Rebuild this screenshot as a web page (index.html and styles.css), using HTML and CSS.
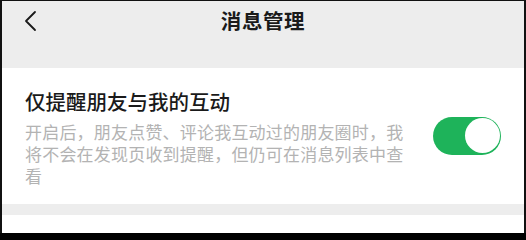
FILE: index.html
```html
<!DOCTYPE html>
<html lang="zh-CN">
<head>
<meta charset="utf-8">
<link rel="stylesheet" href="styles.css">
</head>
<body>
<div class="frame">
  <header class="topbar">
    <div class="bar-row">
      <svg class="back" width="14" height="22" viewBox="0 0 14 22"><polyline points="11,2 2,11 11,20" fill="none" stroke="#1a1a1a" stroke-width="1.8" stroke-linecap="round" stroke-linejoin="round"/></svg>
      <h1 class="title">消息管理</h1>
    </div>
  </header>
  <section class="setting">
    <div class="setting-text">
      <div class="setting-name">仅提醒朋友与我的互动</div>
      <div class="setting-desc">开启后，朋友点赞、评论我互动过的朋友圈时，我将不会在发现页收到提醒，但仍可在消息列表中查看</div>
    </div>
    <div class="switch on"><span class="knob"></span></div>
  </section>
  <div class="divider"></div>
  <section class="next"></section>
</div>
</body>
</html>
```
FILE: styles.css
```css
html, body {
  margin: 0;
  padding: 0;
  background: #000;
}
.frame {
  box-sizing: border-box;
  width: 526px;
  height: 233px;
  border-top: 1px solid #111;
  border-left: 2px solid #111;
  border-right: 2px solid #111;
  background: #fff;
  display: flex;
  flex-direction: column;
  font-family: "Noto Sans CJK SC", "Noto Sans", sans-serif;
  overflow: hidden;
}
.topbar {
  background: #ededed;
  height: 67px;
  flex: none;
}
.bar-row {
  position: relative;
  height: 38px;
  display: flex;
  align-items: center;
  justify-content: center;
}
.back {
  position: absolute;
  left: 22px;
  top: 9px;
}
.title {
  margin: 0;
  font-size: 20.5px;
  font-weight: 700;
  color: #1a1a1a;
  letter-spacing: 0.6px;
  line-height: 28px;
}
.setting {
  background: #fff;
  height: 136px;
  flex: none;
  display: flex;
  align-items: center;
  justify-content: space-between;
  padding: 0 23px;
  box-sizing: border-box;
}
.setting-text {
  width: 386px;
  margin-top: 2px;
}
.setting-name {
  font-size: 20.5px;
  font-weight: 500;
  line-height: 28px;
  color: #1a1a1a;
  margin-bottom: 6px;
}
.setting-desc {
  font-size: 17px;
  letter-spacing: 0.2px;
  line-height: 22px;
  color: #b3b3b3;
}
.switch {
  width: 68px;
  height: 38px;
  border-radius: 19px;
  background: #1eb35a;
  position: relative;
  flex: none;
  margin-top: -1px;
}
.knob {
  position: absolute;
  right: 1.5px;
  top: 1.5px;
  width: 35px;
  height: 35px;
  border-radius: 50%;
  background: #fff;
}
.divider {
  height: 11px;
  background: #ededed;
  flex: none;
}
.next {
  flex: 1;
  background: #fff;
}
```
